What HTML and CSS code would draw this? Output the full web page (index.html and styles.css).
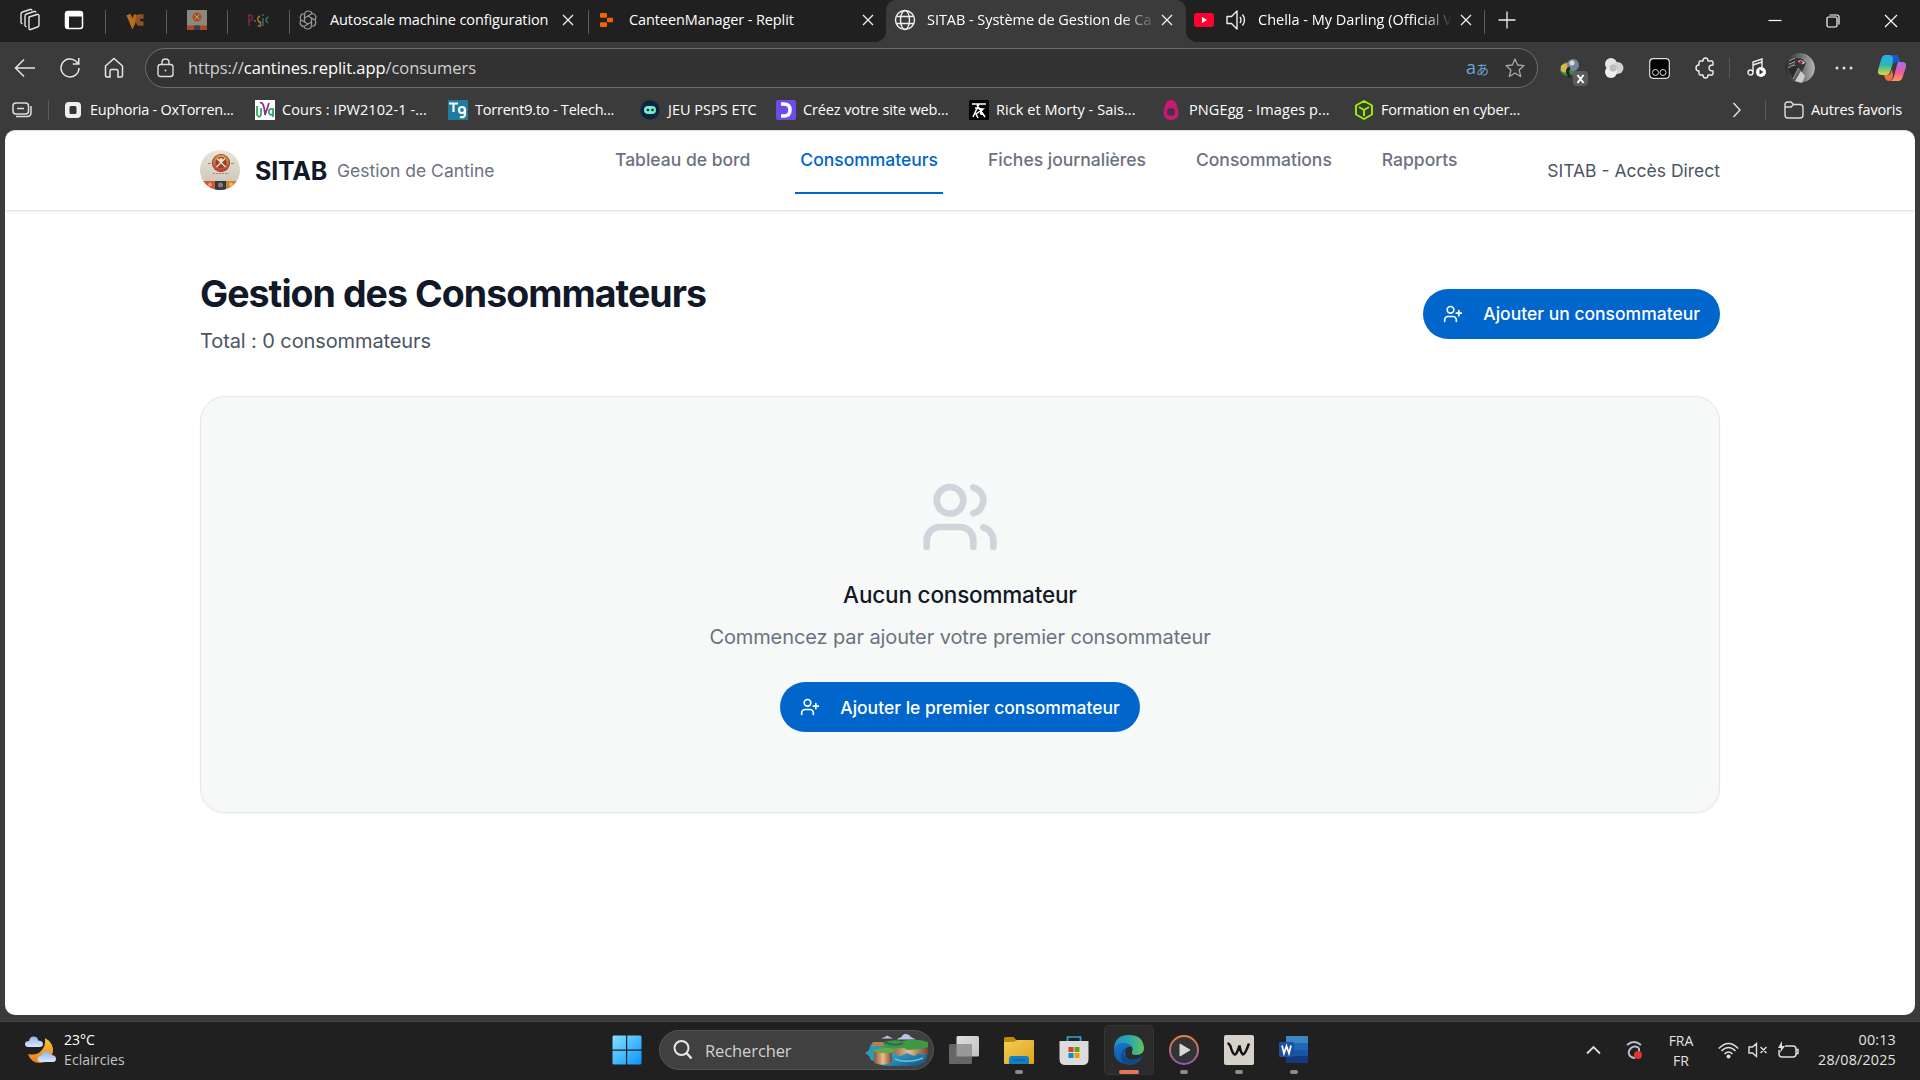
FILE: index.html
```
<!DOCTYPE html>
<html lang="fr">
<head>
<meta charset="utf-8">
<title>SITAB - Système de Gestion de Cantine</title>
<link rel="stylesheet" href="styles.css">
</head>
<body>
<div class="desktop">
  <div class="tabstrip">
    <div class="tab-tools">
      <svg class="ico" width="22" height="24" viewBox="0 0 22 24" fill="none" stroke="#e4e4e4" stroke-width="1.4" stroke-linejoin="round"><path d="M10 9l8-2.500q2-.5 2 1.500v9q0 1.500-1.500 2l-7 2.500q-1.500.5-1.500-1z"/><path d="M6 18V8q0-1.500 1.500-2L15 3.500q1.500-.5 2 1M2 15V6q0-1.500 1.500-2L11 1.500q1.500-.5 2 1M6 18l1.500 1M2 15l1.500 1"/></svg>
      <svg class="ico" width="20" height="20" viewBox="0 0 20 20"><rect x="1.500" y="1.500" width="17" height="17" rx="2.500" fill="none" stroke="#fff" stroke-width="1.500"/><path d="M2 2h16v4.500H2zM2 6h3v12H2z" fill="#fff"/></svg>
    </div>
    <div class="pin"><svg width="20" height="18" viewBox="0 0 20 18" fill="none" stroke-width="4.500"><path d="M2.500 3.500L6.500 13l4-9" stroke="#b96c1c"/><path d="M17.500 5.500h-4.500q-3 3.500 0 7h4.500" stroke="#8f551c"/></svg></div>
    <div class="pin"><svg width="20" height="20" viewBox="0 0 20 20"><path fill="#8d887d" d="M0 0h20v20H0z"/><circle cx="10" cy="7" r="4.500" fill="#a44f2a"/><path d="M7.500 4.500l5 5m0-5l-5 5" stroke="#c89a70"/><path fill="#a84a28" d="M0 15.500h20V20H0z"/><path fill="#34444a" d="M7 15.500h6V20H7z"/></svg></div>
    <div class="pin"><svg width="22" height="18" viewBox="0 0 22 18" fill="none" stroke-width="1.500"><path stroke="#7d2742" d="M2 15V4q5 0 3 5l-3 1"/><path stroke="#55743a" d="M7 10h2"/><path stroke="#9c7730" d="M13 5q-4 2-1 6h1.500v4h-3"/><path stroke="#365f99" d="M16 7v8M16 3v2"/><path stroke="#377b4f" d="M21.500 6q-5 2-.5 6"/></svg></div>
    <div class="tab tab-a">
      <svg class="fav" width="18" height="20" viewBox="0 0 18 20" fill="none" stroke="#9b9b9b" stroke-width="1.200"><path d="M9 6l3.500 2v4L9 14l-3.500-2V8z"/><path d="M5.500 12V5q0-4 4-4 2.500 0 3.500 2M9 6l4-2.500q3 0 4 3.500 0 2-1 3M12.500 8v7q0 4-4 4-2.500 0-3.500-2M9 14l-4 2.500q-3 0-4-3.500 0-2 1-3M12.500 8l3.500 2q2 3-1 6h-2M5.500 12L2 10q-2-3 1-6h2"/></svg>
      <span class="tab-text">Autoscale machine configuration</span>
      <svg class="x" width="12" height="12" viewBox="0 0 12 12"><path d="M1 1l10 10M11 1L1 11"/></svg>
    </div>
    <div class="tab tab-b">
      <svg class="fav" width="14" height="16" viewBox="0 0 14 16" fill="#f26207"><rect x="0" y="1" width="7" height="4.700" rx="1"/><rect x="7" y="5.700" width="6" height="4.600" rx="1"/><rect x="0" y="10.300" width="7" height="4.700" rx="1"/></svg>
      <span class="tab-text">CanteenManager - Replit</span>
      <svg class="x" width="12" height="12" viewBox="0 0 12 12"><path d="M1 1l10 10M11 1L1 11"/></svg>
    </div>
    <div class="tab tab-active">
      <svg class="fav" width="22" height="22" viewBox="0 0 22 22" fill="none" stroke="#f0f0f0" stroke-width="1.400"><circle cx="11" cy="11" r="9.500"/><ellipse cx="11" cy="11" rx="4.500" ry="9.500"/><path d="M2.500 7.500h17M2.500 14.500h17"/></svg>
      <span class="tab-text">SITAB - Système de Gestion de Ca</span>
      <svg class="x" width="12" height="12" viewBox="0 0 12 12"><path d="M1 1l10 10M11 1L1 11"/></svg>
    </div>
    <div class="tab tab-d">
      <svg class="fav" width="20" height="14" viewBox="0 0 20 14"><rect width="20" height="14" rx="3" fill="#ff0033"/><path d="M8 4l5 3-5 3z" fill="#fff"/></svg>
      <svg class="spk" width="21" height="20" viewBox="0 0 21 20" fill="none" stroke="#eee" stroke-width="1.400" stroke-linejoin="round"><path d="M1 6.500h4.500L11 1v18l-5.500-5.500H1z"/><path d="M14 7q2 3 0 6M16.500 4.500q4 5.500 0 11"/></svg>
      <span class="tab-text">Chella - My Darling (Official V</span>
      <svg class="x" width="12" height="12" viewBox="0 0 12 12"><path d="M1 1l10 10M11 1L1 11"/></svg>
    </div>
    <svg class="newtab" width="18" height="18" viewBox="0 0 18 18"><path d="M9 0.500v17M.5 9h17" stroke="#eee" stroke-width="1.300"/></svg>
    <div class="winbtns">
      <svg width="14" height="14" viewBox="0 0 14 14"><path d="M0.500 6.500h13"/></svg>
      <svg width="14" height="14" viewBox="0 0 14 14"><rect x="1" y="3" width="10" height="10" rx="1.500"/><path d="M3.500 1h7.500q2 0 2 2v7.500"/></svg>
      <svg width="14" height="14" viewBox="0 0 14 14"><path d="M1 1l12 12M13 1L1 13"/></svg>
    </div>
  </div>

  <div class="toolbar">
    <div class="nav-icons">
      <svg width="22" height="20" viewBox="0 0 22 20"><path d="M21 10H1.500M10 1.500L1.500 10l8.500 8.500"/></svg>
      <svg width="22" height="22" viewBox="0 0 22 22"><path d="M20 11a9 9 0 1 1-3-6.800L19.500 7M19.800 1v6h-6"/></svg>
      <svg width="20" height="22" viewBox="0 0 20 22"><path d="M1.500 9L10 1.500 18.500 9v9.500q0 1.500-1.500 1.500h-3v-6q0-1.500-1.500-1.500h-5Q6 12.500 6 14v6H3q-1.500 0-1.500-1.500z"/></svg>
    </div>
    <div class="address">
      <svg class="lock" width="17" height="20" viewBox="0 0 17 20" fill="none" stroke="#ddd" stroke-width="1.400"><rect x="1" y="6.500" width="15" height="12" rx="2.500"/><path d="M5 6.500V4.500q0-3.500 3.500-3.500T12 4.500v2"/><circle cx="8.500" cy="12.500" r="1" fill="#ddd" stroke="none"/></svg>
      <span class="url">https://<b>cantines.replit.app</b>/consumers</span>
      <span class="translate">a<i>あ</i></span>
      <svg class="star" width="20" height="20" viewBox="0 0 20 20" fill="none" stroke="#a8a8a8" stroke-width="1.300" stroke-linejoin="round"><path d="M10 1l2.600 6 6.400.6-4.900 4.300 1.600 6.600-5.700-3.500-5.700 3.500 1.600-6.600L1 7.600 7.400 7z"/></svg>
    </div>
    <div class="ext">
      <svg width="30" height="28" viewBox="0 0 30 28"><ellipse cx="9" cy="11" rx="8" ry="7" fill="#3d8745"/><path d="M2 8q5-5 9-1L6 15l-4-2z" fill="#ddb44a"/><circle cx="14" cy="7" r="6" fill="#71879d"/><circle cx="13" cy="5" r="2.500" fill="#d5dfd8"/><path d="M11 10q-5 2 0 9" fill="none" stroke="#232323" stroke-width="3"/><rect x="14" y="13" width="15" height="15" rx="4" fill="#5c5c5c"/><path d="M18.500 17l6 8m0-8l-6 8" stroke="#fff" stroke-width="2"/></svg>
      <svg width="20" height="20" viewBox="0 0 20 20"><circle cx="7" cy="6" r="6" fill="#e4e4e4"/><circle cx="13.500" cy="10" r="6" fill="#d2d2d2"/><circle cx="7" cy="14" r="6" fill="#efefef"/><circle cx="9" cy="10" r="3.500" fill="#bdbdbd"/></svg>
      <svg width="21" height="21" viewBox="0 0 21 21" fill="none"><rect x=".7" y=".7" width="19.600" height="19.600" rx="3.500" fill="#000" stroke="#ddd" stroke-width="1.200"/><circle cx="6.500" cy="14.500" r="3" stroke="#ddd"/><circle cx="14" cy="14.500" r="3" stroke="#ddd"/></svg>
      <svg width="20" height="22" viewBox="0 0 20 22" fill="none" stroke="#eee" stroke-width="1.400" stroke-linejoin="round"><path d="M5.500 4H8q0-3 2.500-3T13 4h3.500q1.500 0 1.500 1.500V8q-4 0-4 3t4 3v2.500q0 1.500-1.500 1.500H13q0 3-2.500 3T8 18H5.500Q4 18 4 16.500V14q-3 0-3-3t3-3V5.500Q4 4 5.500 4z"/></svg>
      <span class="vsep"></span>
      <svg width="20" height="20" viewBox="0 0 20 20" fill="none" stroke="#eee" stroke-width="1.400"><path d="M6 14V4l9-3v8M6 7l9-3"/><circle cx="3.500" cy="14.500" r="2.500"/><circle cx="14" cy="14" r="5" fill="#fff" stroke="none"/><path d="M12.500 11.500l4 2.500-4 2.500z" fill="#333" stroke="none"/></svg>
      <svg width="30" height="30" viewBox="0 0 30 30"><defs><linearGradient id="av"><stop offset="0" stop-color="#2c2c2c"/><stop offset=".5" stop-color="#686868"/><stop offset="1" stop-color="#b5b5b5"/></linearGradient><clipPath id="avc"><circle cx="15" cy="15" r="15"/></clipPath></defs><g clip-path="url(#avc)"><circle cx="15" cy="15" r="15" fill="url(#av)"/><path d="M4 8q9-6 18 0-8-2-18 3M3 15q7-5 11-1L8 26" stroke="#a6a6a6" fill="#292929"/><path d="M10 28l6-10 4 5-3 7z" fill="#ccc"/><path d="M10 5q8-1 11 5l-4 9q-3-5-7-6z" fill="#353535"/><path d="M13 8q5-2 7 2-4 3-7-2z" fill="#ddd"/><circle cx="16" cy="9.500" r="1.800" fill="#a72334"/></g></svg>
      <svg width="18" height="6" viewBox="0 0 18 6" fill="#ddd"><circle cx="2" cy="3" r="1.500"/><circle cx="9" cy="3" r="1.500"/><circle cx="16" cy="3" r="1.500"/></svg>
      <svg width="28" height="28" viewBox="0 0 28 28"><defs><linearGradient id="ca" x2="0" y2="1"><stop stop-color="#27a9f3"/><stop offset=".5" stop-color="#29b9b0"/><stop offset="1" stop-color="#e7d533"/></linearGradient><linearGradient id="cb" x2="0" y2="1"><stop stop-color="#a56df1"/><stop offset=".55" stop-color="#ee5b99"/><stop offset="1" stop-color="#ff9d54"/></linearGradient></defs><path d="M8 1h9q3 0 4 4l1 3h-4q-3 0-4 4l-2 6q-1 3-4 3H4q-5 0-4-5L3 6q1-5 5-5z" fill="url(#ca)"/><path d="M17 1q3 0 4 4l1 3h-4q-3 0-4 4l1-7q0-3-3-4z" fill="#1c57c9"/><path d="M20 8h4q5 0 4 5l-3 9q-1 5-5 5h-9q4 0 5-5l3-11q.5-2 1-3z" fill="url(#cb)"/><path d="M6 21h3q3 0 4-3l1-3 1 6q0 6-5 6-3-1-4-6z" fill="#f2703d"/></svg>
    </div>
  </div>

  <div class="bookmarks">
    <div class="bm-tool"><svg width="20" height="16" viewBox="0 0 20 16" fill="none" stroke="#ddd" stroke-width="1.500"><rect x="1" y="1" width="15.500" height="11" rx="3"/><path d="M5 6.500h7M4 14.500h11q4 0 4-4V4"/></svg><span class="vsep"></span></div>
    <div class="bm bm1"><svg width="20" height="20" viewBox="0 0 20 20"><rect x="2" y="2" width="16" height="16" rx="4" fill="#eee"/><rect x="6.500" y="6" width="7" height="8" rx="1.500" fill="#353535"/></svg><span>Euphoria - OxTorren...</span></div>
    <div class="bm bm2"><svg width="20" height="20" viewBox="0 0 20 20" fill="none" stroke-width="1.800"><path d="M0 0h20v20H0z" fill="#fff"/><path d="M2 6v9q3 4 4-1V8" stroke="#38a666"/><path d="M5 3q4-2 5 12L14 3" stroke="#912c8d"/><path d="M18 9q-5-1-4 4 2 4 4 0V8v9" stroke="#38a666"/></svg><span>Cours : IPW2102-1 -...</span></div>
    <div class="bm bm3"><svg width="20" height="20" viewBox="0 0 20 20" fill="none" stroke="#fff" stroke-width="2.200"><path d="M0 0h20v20H0z" fill="#217ba1" stroke="none"/><path d="M1 3.500h9M5.500 3v9"/><circle cx="14" cy="10" r="3"/><path d="M17 9v5q0 4-5 3"/></svg><span>Torrent9.to - Telech...</span></div>
    <div class="bm bm4"><svg width="20" height="20" viewBox="0 0 20 20"><circle cx="10" cy="10" r="9.700" fill="#0c2440"/><rect x="4" y="6" width="12" height="8" rx="4" fill="#7be9c8"/><circle cx="8" cy="10" r="1.300" fill="#0c2440"/><circle cx="12.500" cy="10" r="1.300" fill="#0c2440"/></svg><span>JEU PSPS ETC</span></div>
    <div class="bm bm5"><svg width="20" height="20" viewBox="0 0 20 20"><rect width="20" height="20" rx="2" fill="#6d4bea"/><path d="M5 4h3q6 0 6 6t-6 6H5" fill="none" stroke="#fff" stroke-width="3.500"/></svg><span>Créez votre site web...</span></div>
    <div class="bm bm6"><svg width="20" height="20" viewBox="0 0 20 20" fill="none" stroke="#fff" stroke-width="1.500"><rect width="20" height="20" rx="1.500" fill="#000" stroke="none"/><path d="M3 4h14M10 4L4 17M8 5l8 12M6 8l8 1-7 5 2 4M14 9q-5 6 0 5"/></svg><span>Rick et Morty - Sais...</span></div>
    <div class="bm bm7"><svg width="20" height="20" viewBox="0 0 20 20"><path d="M10 0q5 0 7 9 2 11-7 11T3 9Q5 0 10 0z" fill="#c91b6d"/><circle cx="10" cy="12" r="4" fill="#49304a"/></svg><span>PNGEgg - Images p...</span></div>
    <div class="bm bm8"><svg width="20" height="20" viewBox="0 0 20 20" fill="none" stroke="#9fef00" stroke-width="1.900" stroke-linejoin="round"><path d="M10 1l8 4.500v9L10 19l-8-4.500v-9zM5 7l5 3 5-3M10 10v6"/></svg><span>Formation en cyber...</span></div>
    <svg class="more" width="10" height="16" viewBox="0 0 10 16"><path d="M1.500 1L8 8l-6.500 7" fill="none" stroke="#e4e4e4" stroke-width="1.400"/></svg>
    <span class="vsep"></span>
    <div class="bm bm9"><svg width="20" height="18" viewBox="0 0 20 18" fill="none" stroke="#ddd" stroke-width="1.400"><path d="M1 4q0-3 2.500-3H7l2.500 2.500H16q3 0 3 3V14q0 3-3 3H4q-3 0-3-3zM1 6h6l2.500-2.500"/></svg><span>Autres favoris</span></div>
  </div>

  <div class="page">
    <header class="header">
      <div class="container header-in">
        <div class="brand">
          <svg class="logo" width="40" height="40" viewBox="0 0 40 40"><defs><clipPath id="lc"><circle cx="20" cy="20" r="20"/></clipPath><linearGradient id="lg" x2="0" y2="1"><stop stop-color="#e9e5d8"/><stop offset="1" stop-color="#c8c2b3"/></linearGradient><linearGradient id="em" x2="0" y2="1"><stop stop-color="#ec9a3c"/><stop offset="1" stop-color="#cf3a2e"/></linearGradient></defs><g clip-path="url(#lc)"><path d="M0 0h40v40H0z" fill="url(#lg)"/><circle cx="21" cy="13" r="9" fill="#5a3f3a"/><circle cx="21" cy="13" r="8.200" fill="url(#em)"/><circle cx="21" cy="12.500" r="5.500" fill="#8c4234"/><path d="M17 8.500l8.500 8.500M25 8.500L16.500 17" stroke="#f3dfc4" stroke-width="1.400"/><circle cx="21" cy="10" r="2" fill="#f3dfc4"/><path d="M8 13.500h3m20 0h3" stroke="#777" stroke-width=".8"/><path d="M13 23.500h16" stroke="#c2766a" stroke-dasharray="2 1"/><path d="M0 31h15v9H0z" fill="#d8552c"/><path d="M15 31h11v9H15z" fill="#273e49"/><path d="M26 31h14v9H26z" fill="#dd7e2c"/><circle cx="20.500" cy="35" r="2.500" fill="#a97161"/><circle cx="10" cy="34.500" r="2" fill="#e59b76"/><circle cx="31" cy="34.500" r="2" fill="#edb477"/></g></svg>
          <strong>SITAB</strong><span>Gestion de Cantine</span>
        </div>
        <nav class="nav">
          <a>Tableau de bord</a><a class="on">Consommateurs</a><a>Fiches journalières</a><a>Consommations</a><a>Rapports</a>
        </nav>
        <div class="access">SITAB - Accès Direct</div>
      </div>
    </header>
    <main class="container main">
      <div class="title-row">
        <div>
          <h1>Gestion des Consommateurs</h1>
          <p class="total">Total : 0 consommateurs</p>
        </div>
        <button class="btn"><svg width="20" height="20" viewBox="0 0 24 24"><path d="M16 21v-2a4 4 0 0 0-4-4H6a4 4 0 0 0-4 4v2"/><circle cx="9" cy="7" r="4"/><path d="M19 8v6M22 11h-6"/></svg>Ajouter un consommateur</button>
      </div>
      <section class="card">
        <svg class="users" width="80" height="80" viewBox="0 0 24 24"><path d="M16 21v-2a4 4 0 0 0-4-4H6a4 4 0 0 0-4 4v2"/><circle cx="9" cy="7" r="4"/><path d="M22 21v-2a4 4 0 0 0-3-3.870M16 3.130a4 4 0 0 1 0 7.750"/></svg>
        <h3>Aucun consommateur</h3>
        <p>Commencez par ajouter votre premier consommateur</p>
        <button class="btn"><svg width="20" height="20" viewBox="0 0 24 24"><path d="M16 21v-2a4 4 0 0 0-4-4H6a4 4 0 0 0-4 4v2"/><circle cx="9" cy="7" r="4"/><path d="M19 8v6M22 11h-6"/></svg>Ajouter le premier consommateur</button>
      </section>
    </main>
  </div>

  <div class="taskbar">
    <div class="weather">
      <svg width="31" height="30" viewBox="0 0 31 30"><defs><linearGradient id="mn" x2="0" y2="1"><stop stop-color="#f5c83d"/><stop offset="1" stop-color="#ee7a19"/></linearGradient><linearGradient id="cl" x2="0" y2="1"><stop stop-color="#8fb2ec"/><stop offset="1" stop-color="#dbe8fb"/></linearGradient></defs><path d="M20 3q9 5 8 14-2 11-13 11-9 0-12-9 9 2 14-4 4-5 3-12z" fill="url(#mn)"/><path d="M3.500 12q-3.500 0-3.500-3 0-3 4-3 1-5 5-4.500 4 .5 4 4 5 0 5 3.500 0 3-3.500 3z" fill="url(#cl)"/><path d="M16 27q-3.500 0-3.500-3 0-3 4-3.500 1-4 5-4t4.500 3.500q5 0 5 4 0 3-3.500 3z" fill="url(#cl)"/></svg>
      <div><span class="deg">23°C</span><span class="cond">Eclaircies</span></div>
    </div>
    <div class="center">
      <svg class="start" width="30" height="30" viewBox="0 0 30 30"><defs><linearGradient id="ws" x2="1" y2="1"><stop stop-color="#85e0ff"/><stop offset="1" stop-color="#0795ff"/></linearGradient></defs><path fill="url(#ws)" d="M1.500 0.500H14v14H.5v-13zM15.200.5h13.300l1 1v13H15.200zM.5 15.700H14v13.800H1.500l-1-1zM15.200 15.700h14.300v12.800l-1 1H15.200z"/></svg>
      <div class="search">
        <svg width="20" height="20" viewBox="0 0 20 20" fill="none" stroke="#e4e7ea" stroke-width="2"><circle cx="8.500" cy="8" r="7"/><path d="M13.500 13l5 5.500" stroke-width="2.400"/></svg>
        <span>Rechercher</span>
        <svg class="isle" width="66" height="33" viewBox="0 0 66 33"><defs><linearGradient id="se" x2="1" y2="1"><stop stop-color="#2c95a5"/><stop offset=".5" stop-color="#2d9fc5"/><stop offset="1" stop-color="#174d83"/></linearGradient><linearGradient id="rk"><stop stop-color="#80563f"/><stop offset=".5" stop-color="#edbd8b"/><stop offset="1" stop-color="#6e4637"/></linearGradient></defs><path d="M9 8h54v11q0 13-14 13H22q-8-1-12-5l-3-1-2-4-4-3 4-3 1-4z" fill="url(#se)"/><path d="M17 4.500q2-1.500 4-1.500l2-1.500 3 1.500 3 1.500zM33 5.500q1-2 4-2 2-4 5-3.500 3 0 5 3l5 2.500z" fill="#b4c5df"/><path d="M26 10l38 1v9l-6 1-3-2-5 3-7-3-7 3-5-2-3-2z" fill="url(#rk)"/><path d="M18 9q9-4 20-2 14-3 26 1v5q-9 3-19 3-3 0-5-2-12 1-22-1-4-2 0-4z" fill="#3e9945"/><path d="M20 8q10 5 19 1" stroke="#246f4d" stroke-width="2" fill="none"/><path d="M9 8h10l1 4H8z" fill="#bb7c55"/><path d="M10 17h18v11q-7 5-18 1z" fill="url(#rk)"/><path d="M9 17q8-5 22-2 1 3-5 4-10 1-17-2z" fill="#65aa45"/><path d="M31 25q12 5 28-1" stroke="#65c8d6" stroke-width="1.500" fill="none"/></svg>
      </div>
      <div class="app"><svg width="30" height="30" viewBox="0 0 30 30"><defs><linearGradient id="tv" x2="1" y2="1"><stop stop-color="#dedede"/><stop offset="1" stop-color="#c3c3c3"/></linearGradient></defs><rect x="7.500" y="1" width="22.500" height="20.500" rx="1.500" fill="url(#tv)"/><rect y="9" width="23" height="20" rx="1.500" fill="#666"/><path d="M7.500 9H23v12.500H7.500z" fill="#999"/></svg></div>
      <div class="app run"><svg width="30" height="30" viewBox="0 0 30 30"><defs><linearGradient id="fd" x2="1" y2="1"><stop stop-color="#f1cc5a"/><stop offset="1" stop-color="#e0a417"/></linearGradient></defs><path d="M0 9V3.500Q0 2 1.500 2h8L13 5.500V9z" fill="#c38905"/><path d="M0 7h10l3-2h16q1 0 1 1v22q0 1-1 1H1q-1 0-1-1z" fill="url(#fd)"/><path d="M5 29v-5q0-3 3-3h14q3 0 3 3v5z" fill="#1280c6"/><path d="M9 25h12" stroke="#0a518c"/></svg></div>
      <div class="app"><svg width="30" height="30" viewBox="0 0 30 30"><path d="M8.500 8V2h13v6" fill="none" stroke="#2aa8d8" stroke-width="1.700"/><path d="M.5 6h29v18q0 6-6 6h-17q-6 0-6-6z" fill="#dcdcdc"/><path d="M9.500 12h5v5h-5z" fill="#d33f21"/><path d="M15.500 12h5v5h-5z" fill="#6d9f08"/><path d="M9.500 18h5v5h-5z" fill="#078ed6"/><path d="M15.500 18h5v5h-5z" fill="#e9a007"/></svg></div>
      <div class="app active"><svg width="30" height="30" viewBox="0 0 30 30"><defs><linearGradient id="ea"><stop stop-color="#238fc5"/><stop offset=".5" stop-color="#28a7ae"/><stop offset="1" stop-color="#61c657"/></linearGradient><linearGradient id="eb" x2="0" y2="1"><stop stop-color="#1773c5"/><stop offset="1" stop-color="#0b5cae"/></linearGradient></defs><path d="M0 15Q0 0 15 0q14 0 15 13 0 7-8 7-5 0-4-3 3-6-6-8-8-1-12 6z" fill="url(#ea)"/><path d="M0 16q1-9 10-8 6 0 8 4-7-1-7 5 0 8 9 10-4 3-8 2Q0 27 0 16z" fill="url(#eb)"/><path d="M12 13q-5 6 1 10 6 4 16-2-4 9-14 9-6-1-8-7-1-7 5-10z" fill="#11498a"/></svg></div>
      <div class="app run"><svg width="30" height="30" viewBox="0 0 30 30"><defs><linearGradient id="mp" x2="0" y2="1"><stop stop-color="#e5823c"/><stop offset=".5" stop-color="#b96b75"/><stop offset="1" stop-color="#9854bd"/></linearGradient></defs><circle cx="15" cy="15" r="14" fill="#333" stroke="url(#mp)" stroke-width="2"/><path d="M11 9l10 6-10 6z" fill="#d8d8d8" stroke="#d8d8d8" stroke-linejoin="round"/></svg></div>
      <div class="app run"><svg width="30" height="30" viewBox="0 0 30 30"><rect width="30" height="30" rx="2" fill="#d6d2c9"/><path d="M3.500 8.500q2 0 3 3 2 7 4 8 2 1 5-9 1 7 3.500 9 2 0 6-11" fill="none" stroke="#111" stroke-width="2.500"/></svg></div>
      <div class="app run"><svg width="30" height="30" viewBox="0 0 30 30"><path d="M7 1h21q1 0 1 1v6H7z" fill="#3a87c4"/><path d="M7 8h22v7H7z" fill="#2467b8"/><path d="M7 15h22v6H7z" fill="#1b53a5"/><path d="M7 21h22v6q0 1-1 1H7z" fill="#143b80"/><rect y="7" width="15" height="15" rx="1.500" fill="#1c50a6"/><path d="M3 10.500l2 8 2.500-7.500L10 18.500l2-8" stroke="#fff" stroke-width="1.700" fill="none"/></svg></div>
    </div>
    <div class="tray">
      <svg width="15" height="10" viewBox="0 0 15 10"><path d="M1 8.500L7.500 2 14 8.500" fill="none" stroke="#ddd" stroke-width="1.800"/></svg>
      <svg class="sync" width="18" height="20" viewBox="0 0 18 20" fill="none" stroke="#b9bfd0" stroke-width="1.900"><path d="M1 5q7-6 14 0"/><path d="M13 8q-4-3-8 0-4 4-1 8 2 2 5 2"/><path d="M13 8v6" /><circle cx="12" cy="15" r="4" fill="#e0352f" stroke="none"/></svg>
      <div class="lang"><span>FRA</span><span>FR</span></div>
      <svg class="wifi" width="21" height="17" viewBox="0 0 21 17" fill="none" stroke="#ddd" stroke-width="1.500"><path d="M.8 6.500q9.700-10 19.400 0M3.500 9q7-7 14 0M6.500 12q4-4 8 0"/><circle cx="10.500" cy="14.500" r="2" fill="#ddd" stroke="none"/></svg>
      <svg class="mute" width="20" height="16" viewBox="0 0 20 16" fill="none" stroke="#ddd" stroke-width="1.400"><path d="M1 5h3.500L8.500 1.500v13L4.500 11H1zM12.500 5l6 6M18.500 5l-6 6"/></svg>
      <svg class="batt" width="21" height="18" viewBox="0 0 21 18" fill="none" stroke="#ddd" stroke-width="1.500"><path d="M7 5h8q3 0 3 3v5q0 3-3 3H4q-3 0-3-3V9M18.500 8.500h1.500v4h-1.500"/><path d="M4 0L0 7h3l-1 5 5-7H4z" fill="#ddd" stroke="none"/></svg>
      <div class="clock"><span>00:13</span><span>28/08/2025</span></div>
    </div>
  </div>
</div>
</body>
</html>
```
FILE: styles.css
```
* { box-sizing: border-box; }
body { margin: 0; background: #3b3b3b; }
svg { display: block; flex: none; }
h1, h3, p { margin: 0; }
.desktop { width: 1920px; height: 1080px; overflow: hidden; display: flex; flex-direction: column; background: #3b3b3b; font-family: "Open Sans", "Noto Sans", sans-serif; color: #fff; }

/* Browser tab strip */
.tabstrip { height: 42px; flex: none; display: flex; background: #202020; }
.tab-tools { width: 105px; display: flex; align-items: center; padding-left: 19px; gap: 23px; padding-bottom: 2px; }
.pin { width: 61px; display: flex; align-items: center; justify-content: center; padding-bottom: 2px; background: linear-gradient(#5c5c5c, #5c5c5c) 0 10px / 1px 24px no-repeat; }
.tab { display: flex; align-items: center; padding-bottom: 2px; position: relative; }
.tab-text { font-size: 14.5px; line-height: 20px; white-space: nowrap; letter-spacing: -.1px; }
.x { margin-left: auto; fill: none; stroke: #f0f0f0; stroke-width: 1.300; }
.tab-a { width: 300px; padding-left: 11px; padding-right: 14px; background: linear-gradient(#5c5c5c, #5c5c5c) 1px 10px / 1px 24px no-repeat; }
.tab-a .tab-text { margin-left: 13px; }
.tab-b { width: 298px; padding-left: 12px; padding-right: 12px; background: linear-gradient(#5c5c5c, #5c5c5c) 0 10px / 1px 24px no-repeat; }
.tab-b .tab-text { margin-left: 15px; }
.tab-active { width: 300px; padding-left: 8px; padding-right: 13px; background: #3b3b3b; border-radius: 10px 10px 0 0; }
.tab-active::before, .tab-active::after { content: ""; position: absolute; bottom: 0; width: 10px; height: 10px; }
.tab-active::before { left: -10px; background: radial-gradient(circle at 0 0, transparent 9.500px, #3b3b3b 10px); }
.tab-active::after { right: -10px; background: radial-gradient(circle at 100% 0, transparent 9.500px, #3b3b3b 10px); }
.tab-active .tab-text { margin-left: 11px; letter-spacing: -.05px; -webkit-mask-image: linear-gradient(90deg, #000 195px, transparent 230px); mask-image: linear-gradient(90deg, #000 195px, transparent 230px); }
.tab-d { width: 299px; padding-left: 8px; padding-right: 13px; background: linear-gradient(#5c5c5c, #5c5c5c) 298px 10px / 1px 24px no-repeat; }
.spk { margin-left: 12px; }
.tab-d .tab-text { margin-left: 11px; letter-spacing: 0; -webkit-mask-image: linear-gradient(90deg, #000 165px, transparent 194px); mask-image: linear-gradient(90deg, #000 165px, transparent 194px); }
.newtab { margin: 11px 0 0 13px; }
.winbtns { margin-left: auto; padding-right: 22px; display: flex; align-items: center; gap: 44px; }
.winbtns svg { fill: none; stroke: #fff; stroke-width: 1.200; }

/* Address row */
.toolbar { height: 52px; flex: none; display: flex; align-items: center; }
.nav-icons { width: 145px; flex: none; display: flex; align-items: center; gap: 23px; padding-left: 14px; }
.nav-icons svg { fill: none; stroke: #e6e6e6; stroke-width: 1.500; }
.address { width: 1393px; flex: none; height: 40px; border: 1px solid #6d6d6d; border-radius: 20px; background: #323232; display: flex; align-items: center; padding: 0 12px 1px 11px; }
.url { margin-left: 14px; padding-bottom: 1px; font-size: 16.500px; letter-spacing: -.06px; color: #d0d0d0; white-space: nowrap; }
.url b { font-weight: 400; color: #fff; }
.translate { margin-left: auto; color: #6ba6d8; font-size: 18px; line-height: 20px; }
.translate i { font: 13px "Noto Sans CJK JP", sans-serif; }
.star { margin-left: 16px; }
.ext { display: grid; grid-template-columns: 48px 46px 44px 48px 1px 54px 32px 56px 40px; align-items: center; justify-items: center; margin-left: 5px; }
.ext svg:first-child { margin-left: 14px; margin-top: 8px; }
.vsep { width: 1px; height: 20px; background: #5a5a5a; }

/* Favourites row */
.bookmarks { height: 36px; flex: none; display: flex; align-items: center; padding-bottom: 4px; }
.bm-tool { width: 63px; display: flex; align-items: center; padding-left: 12px; gap: 16px; }
.bm { display: flex; align-items: center; gap: 7px; font-size: 14.500px; line-height: 20px; white-space: nowrap; }
.bm1 { width: 192px; letter-spacing: -.25px; }
.bm2 { width: 193px; letter-spacing: .08px; }
.bm3 { width: 192px; letter-spacing: -.22px; }
.bm4 { width: 136px; gap: 8px; }
.bm5 { width: 193px; letter-spacing: -.12px; }
.bm6 { width: 192px; letter-spacing: .05px; }
.bm7 { width: 193px; gap: 8px; letter-spacing: .1px; }
.bm8 { width: 378px; letter-spacing: -.2px; }
.more { margin-right: 23px; }
.bm9 { margin-left: 18px; letter-spacing: -.17px; }

/* Web page */
.page { margin: 0 5px; height: 885px; flex: none; background: #fff; border-radius: 10px; overflow: hidden; font-family: Inter, sans-serif; border-top: 1px solid #dedede; }
.container { width: 1520px; margin: 0 auto; }
.header { height: 80px; border-bottom: 1px solid #e5e7eb; box-shadow: 0 1px 3px rgba(0, 0, 0, .08); }
.header-in { height: 79px; display: flex; align-items: center; justify-content: space-between; }
.brand { width: 410px; display: flex; align-items: center; font-size: 17.500px; color: #6b7280; }
.logo { margin-bottom: 2px; }
.brand strong { margin: 0 10px 0 15px; font-size: 25px; letter-spacing: -.2px; color: #111827; }
.nav { display: flex; gap: 40px; height: 66px; flex: 1; font-size: 17.500px; font-weight: 500; line-height: 25px; color: #6b7280; }
.nav a { height: 56px; padding: 9px 5px 0; border-bottom: 2px solid transparent; white-space: nowrap; }
.nav .on { color: #0066cc; border-color: #0066cc; }
.access { font-size: 17.500px; color: #4b5563; }
.title-row { display: flex; align-items: center; justify-content: space-between; margin-top: 60px; height: 85px; }
h1 { font-size: 37.500px; line-height: 45px; font-weight: 700; letter-spacing: -.96px; color: #111827; }
.total { margin-top: 10px; font-size: 20px; line-height: 30px; letter-spacing: -.1px; color: #4b5563; }
.btn { height: 50px; border: 0; border-radius: 25px; background: #0066cc; color: #fff; font: 500 17.500px Inter, sans-serif; display: flex; align-items: center; gap: 20px; padding: 0 20px; white-space: nowrap; }
.btn svg, .users { fill: none; stroke: #fff; stroke-width: 2; stroke-linecap: round; stroke-linejoin: round; }
.card { height: 417px; margin-top: 40px; border: 1px solid #e2e8f0; border-radius: 25px; background: #f7f9f9; box-shadow: 0 1px 2px rgba(0, 0, 0, .05); display: flex; flex-direction: column; align-items: center; padding-top: 80px; }
.card .users { stroke: #d1d5db; }
.card h3 { margin-top: 20px; font-size: 22.500px; font-weight: 500; line-height: 35px; letter-spacing: -.18px; color: #111827; }
.card p { margin: 10px 0 30px; font-size: 20px; line-height: 30px; letter-spacing: -.1px; color: #6b7280; }

/* Taskbar */
.taskbar { height: 59px; margin-top: auto; flex: none; background: #202020; border-top: 1px solid #444; display: grid; grid-template-columns: 612px 707px 1fr; align-items: center; padding-bottom: 2px; }
.weather { display: flex; align-items: center; gap: 8px; padding-left: 25px; padding-bottom: 1px; font-size: 14px; line-height: 20px; }
.weather span { display: block; }
.cond { color: #c4c4c4; letter-spacing: .1px; }
.center { display: flex; align-items: center; }
.start { margin-right: 17px; }
.search { width: 275px; height: 40px; border: 1px solid #555; border-radius: 20px; background: #404040; display: flex; align-items: center; padding-left: 13px; margin-right: 5px; font-size: 16.500px; letter-spacing: -.1px; color: #d2d2d2; }
.search span { margin-left: 12px; }
.isle { margin-left: auto; margin-right: 3px; }
.app { width: 50px; height: 50px; margin-right: 5px; display: grid; place-items: center; position: relative; }
.app.active { background: #2b2b2b; border-radius: 5px; box-shadow: inset 0 0 0 1px #353535; }
.app.run::after, .app.active::after { content: ""; position: absolute; bottom: 1px; left: 21px; width: 8px; height: 4px; border-radius: 2px; background: #8c8c8c; }
.app.active::after { left: 15px; width: 20px; background: #e2775c; }
.app:last-child { margin-right: 0; }
.tray { display: flex; align-items: center; justify-content: flex-end; padding-right: 24px; font-size: 14px; line-height: 20px; color: #e2e2e2; }
.tray span { display: block; }
.sync { margin-left: 25px; }
.lang { width: 30px; margin: 0 22px 0 22px; text-align: center; padding-top: 1px; }
.wifi { margin-right: 9px; }
.mute { margin-right: 10px; }
.batt { margin-right: 19px; }
.clock { width: 78px; text-align: right; white-space: nowrap; font-size: 14.300px; letter-spacing: .2px; }
```
